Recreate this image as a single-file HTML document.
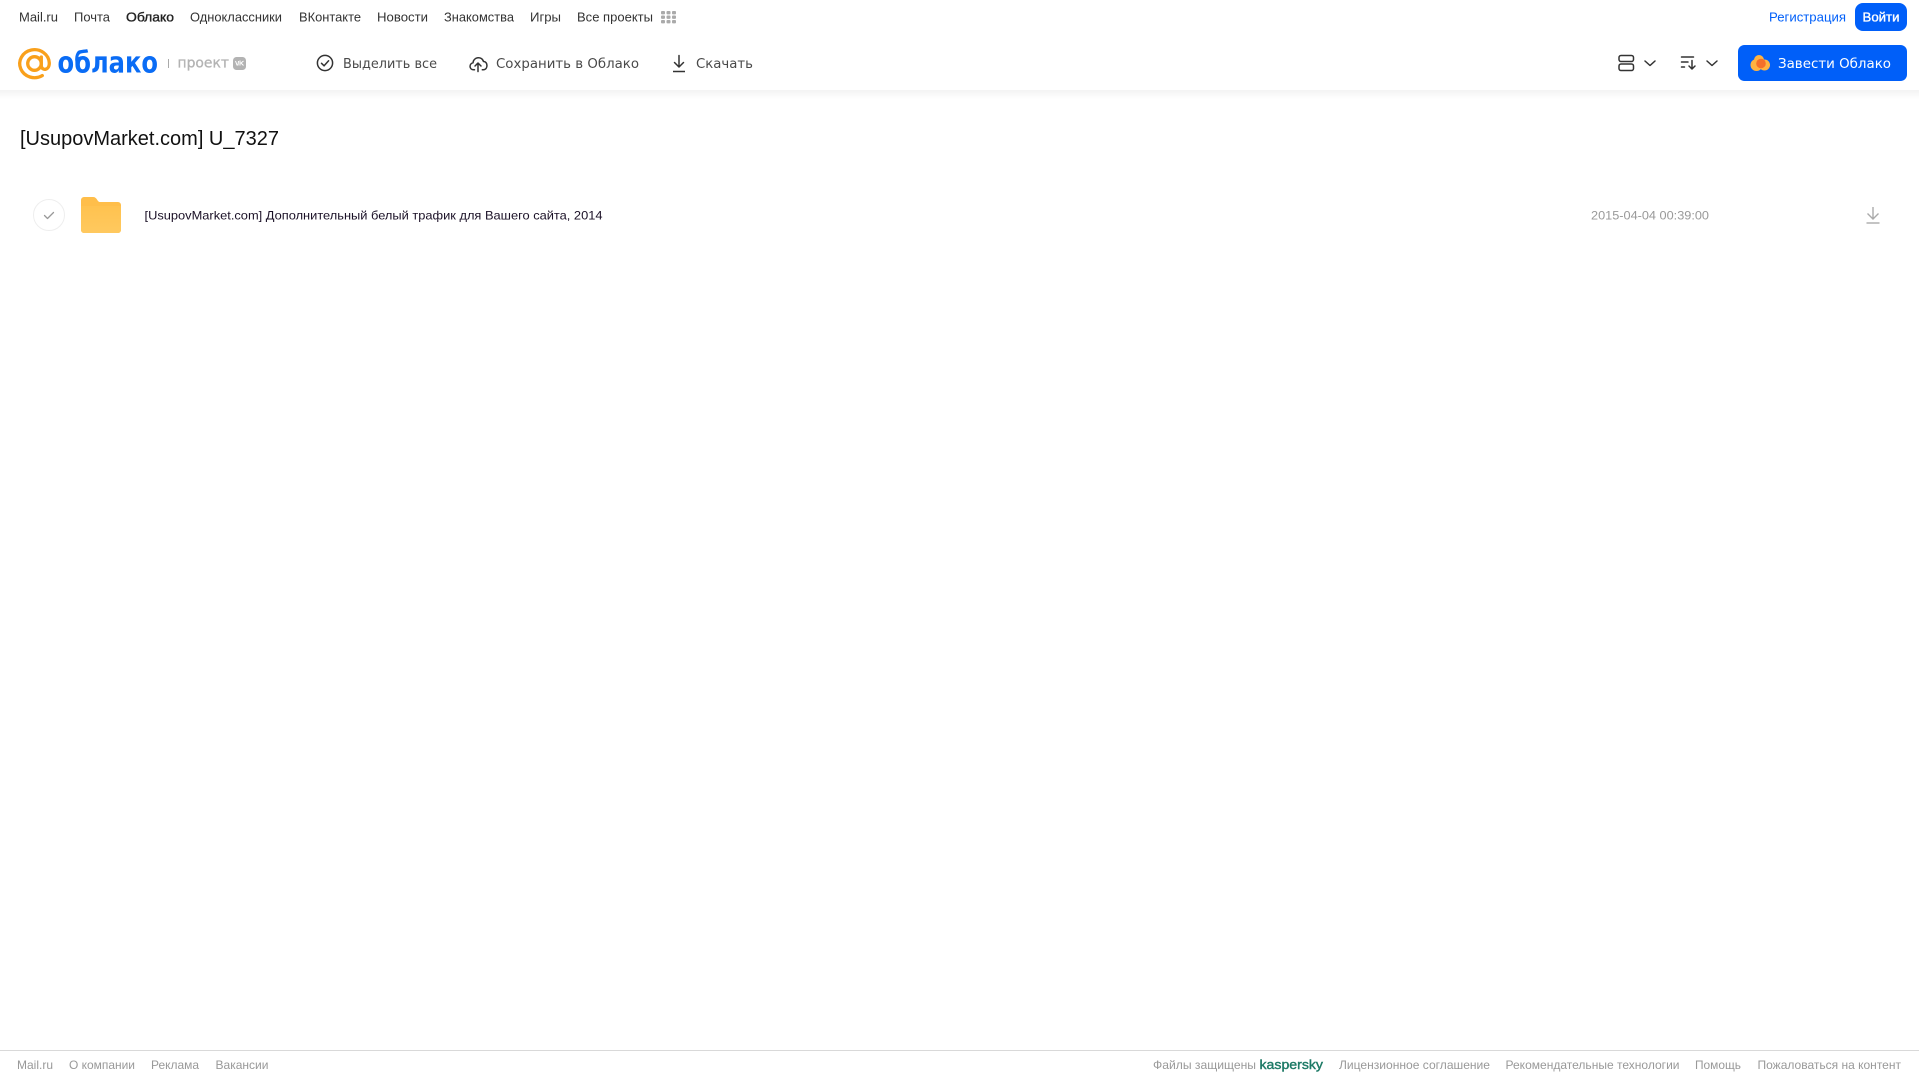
<!DOCTYPE html>
<html lang="ru">
<head>
<meta charset="utf-8">
<title>Облако</title>
<style>
html,body{margin:0;padding:0;background:#fff;width:1919px;height:1079px;overflow:hidden}
svg{display:block}
text{font-family:"Liberation Sans",Arial,sans-serif}
.n{font-size:13px;fill:#333}
.t{font-size:13.5px;fill:#4a4a4a;font-family:"DejaVu Sans","Liberation Sans",sans-serif}
.f{font-size:12px;fill:#999}
</style>
</head>
<body>
<svg width="1919" height="1079" viewBox="0 0 1919 1079" xmlns="http://www.w3.org/2000/svg">
<defs>
<linearGradient id="sh" x1="0" y1="0" x2="0" y2="1"><stop offset="0" stop-color="#f3f3f3"/><stop offset="1" stop-color="#fff"/></linearGradient>
<linearGradient id="fo" x1="0" y1="0" x2="0" y2="1"><stop offset="0" stop-color="#ffc24f"/><stop offset="1" stop-color="#ffc95f"/></linearGradient>
</defs>
<rect width="1919" height="1079" fill="#fff"/>
<rect x="0" y="90" width="1919" height="9" fill="url(#sh)"/>

<!-- top nav -->
<text class="n" x="19" y="21.5" textLength="39" lengthAdjust="spacingAndGlyphs">Mail.ru</text>
<text class="n" x="74" y="21.5" textLength="36" lengthAdjust="spacingAndGlyphs">Почта</text>
<text class="n" x="126" y="21.5" textLength="48" lengthAdjust="spacingAndGlyphs" stroke="#222" stroke-width=".35" style="fill:#222">Облако</text>
<text class="n" x="190" y="21.5" textLength="92" lengthAdjust="spacingAndGlyphs">Одноклассники</text>
<text class="n" x="299" y="21.5" textLength="62" lengthAdjust="spacingAndGlyphs">ВКонтакте</text>
<text class="n" x="377" y="21.5" textLength="51" lengthAdjust="spacingAndGlyphs">Новости</text>
<text class="n" x="444" y="21.5" textLength="70" lengthAdjust="spacingAndGlyphs">Знакомства</text>
<text class="n" x="530" y="21.5" textLength="31" lengthAdjust="spacingAndGlyphs">Игры</text>
<text class="n" x="577" y="21.5" textLength="76" lengthAdjust="spacingAndGlyphs">Все проекты</text>
<g fill="#aaa">
<rect x="661" y="11" width="4" height="3.400" rx="1"/><rect x="666.500" y="11" width="4" height="3.400" rx="1"/><rect x="672" y="11" width="4" height="3.400" rx="1"/>
<rect x="661" y="15.500" width="4" height="3.400" rx="1"/><rect x="666.500" y="15.500" width="4" height="3.400" rx="1"/><rect x="672" y="15.500" width="4" height="3.400" rx="1"/>
<rect x="661" y="20" width="4" height="3.400" rx="1"/><rect x="666.500" y="20" width="4" height="3.400" rx="1"/><rect x="672" y="20" width="4" height="3.400" rx="1"/>
</g>
<text x="1769" y="21.500" font-size="13" fill="#005ff9" textLength="77" lengthAdjust="spacingAndGlyphs">Регистрация</text>
<rect x="1855" y="3" width="52" height="28" rx="8" fill="#005ff9"/>
<text x="1862.500" y="21.500" font-size="13" fill="#fff" stroke="#fff" stroke-width=".35" textLength="37" lengthAdjust="spacingAndGlyphs">Войти</text>

<!-- logo -->
<g fill="none" stroke="#f9a01b" stroke-width="3.300" stroke-linecap="round">
<circle cx="34.500" cy="63.500" r="6.800"/>
<path d="M41.300 57v8.500c0 5.500 8 5.500 8-2.500a14.800 14 0 1 0-7 12.600"/>
</g>
<text x="57.500" y="72.500" font-size="29" font-weight="700" fill="#0a6cf5" style="font-family:'DejaVu Sans','Liberation Sans',sans-serif" textLength="100.500" lengthAdjust="spacingAndGlyphs">облако</text>
<rect x="168" y="59" width="1" height="9" fill="#aaa"/>
<text x="177.500" y="67.500" font-size="14" fill="#b3b3b3" stroke="#b3b3b3" stroke-width=".3" style="font-family:'DejaVu Sans','Liberation Sans',sans-serif" textLength="51.500" lengthAdjust="spacingAndGlyphs">проект</text>
<rect x="233" y="57" width="13" height="13" rx="3.500" fill="#b3b3b3"/>
<path d="M235.500 61l1.500 4h1l.5-4M240 60.500v5M243.500 61l-2.500 2 2.500 2.500" fill="none" stroke="#fff" stroke-width="1"/>

<!-- toolbar -->
<g fill="none" stroke="#333" stroke-width="1.500" stroke-linecap="round" stroke-linejoin="round">
<circle cx="325" cy="63" r="7.600"/>
<path d="M321.500 63.300l2.600 2.500 4.500-5"/>
<path d="M474.500 69.800h-.8c-4.500 0-5-6-.7-7 .5-6 9-7 10.500-1.300 4.300-.3 5 7.800-.2 8.300h-1"/>
<path d="M478 71.500v-8.500M475 66l3-3 3 3"/>
<path d="M679 55.500v11.500M674.500 62.500l4.500 4.500 4.500-4.500"/>
<path d="M673 71.500h12" stroke-linecap="butt"/>
</g>
<text class="t" x="343" y="68" textLength="94" lengthAdjust="spacingAndGlyphs">Выделить все</text>
<text class="t" x="496" y="68" textLength="143" lengthAdjust="spacingAndGlyphs">Сохранить в Облако</text>
<text class="t" x="696" y="68" textLength="57" lengthAdjust="spacingAndGlyphs">Скачать</text>

<!-- right toolbar -->
<g fill="none" stroke="#333" stroke-width="1.500" stroke-linecap="round" stroke-linejoin="round">
<rect x="1619" y="55.500" width="14.500" height="6" rx="2"/>
<rect x="1619" y="64" width="14.500" height="6.500" rx="2"/>
<path d="M1645 61l5 4.500 5-4.500"/>
<path d="M1707 61l5 4.500 5-4.500"/>
<path d="M1681.500 57h12M1681.500 62h6.500M1681.500 67h3"/>
<path d="M1692 60.500v8.500M1689 66l3 3 3-3"/>
</g>
<rect x="1738" y="45" width="169" height="36" rx="6.500" fill="#005ff9"/>
<circle cx="1756.500" cy="65" r="6" fill="#ffb340"/>
<circle cx="1759" cy="60" r="5" fill="#ffb340"/>
<circle cx="1764.500" cy="65" r="5.500" fill="#ffb340"/>
<circle cx="1761" cy="63.500" r="4.800" fill="#f4702a"/>
<text x="1778" y="68" font-size="13.500" fill="#fff" style="font-family:'DejaVu Sans','Liberation Sans',sans-serif" textLength="113" lengthAdjust="spacingAndGlyphs">Завести Облако</text>

<!-- title -->
<text x="20" y="145" font-size="20" fill="#111" textLength="259" lengthAdjust="spacingAndGlyphs">[UsupovMarket.com] U_7327</text>

<!-- row -->
<circle cx="49" cy="215" r="15.500" fill="#fff" stroke="#eee" stroke-width="1"/>
<path d="M44.500 215.500l3 3 6-6" fill="none" stroke="#999" stroke-width="1.300" stroke-linecap="round" stroke-linejoin="round"/>
<path d="M81 200a3 3 0 0 1 3-3h9c2 0 3 1 4 2.500 .8 1.200 1.500 2.500 3 2.500h18a3 3 0 0 1 3 3v25a3 3 0 0 1-3 3H84a3 3 0 0 1-3-3z" fill="#ffbe4a"/>
<path d="M81 206h40v24a3 3 0 0 1-3 3H84a3 3 0 0 1-3-3z" fill="url(#fo)"/>
<text x="144.500" y="219.500" font-size="12" fill="#1a1026" textLength="458" lengthAdjust="spacingAndGlyphs">[UsupovMarket.com] Дополнительный белый трафик для Вашего сайта, 2014</text>
<text x="1591" y="219.500" font-size="12" fill="#999" textLength="118" lengthAdjust="spacingAndGlyphs">2015-04-04 00:39:00</text>
<g fill="none" stroke="#aaa" stroke-width="1.400">
<path d="M1873 207v12M1867.500 213.500l5.500 5.500 5.500-5.500"/>
<path d="M1866.500 223h13"/>
</g>

<!-- footer -->
<rect x="0" y="1050" width="1919" height="1" fill="#d9d9d9"/>
<text class="f" x="17" y="1069" textLength="36" lengthAdjust="spacingAndGlyphs">Mail.ru</text>
<text class="f" x="69" y="1069" textLength="66" lengthAdjust="spacingAndGlyphs">О компании</text>
<text class="f" x="151" y="1069" textLength="48" lengthAdjust="spacingAndGlyphs">Реклама</text>
<text class="f" x="215.500" y="1069" textLength="53" lengthAdjust="spacingAndGlyphs">Вакансии</text>
<text class="f" x="1153" y="1069" textLength="103" lengthAdjust="spacingAndGlyphs">Файлы защищены</text>
<text x="1259.500" y="1069" font-size="13" fill="#1d7a66" stroke="#1d7a66" stroke-width=".4" textLength="63.500" lengthAdjust="spacingAndGlyphs">kaspersky</text>
<text class="f" x="1339" y="1069" textLength="151" lengthAdjust="spacingAndGlyphs">Лицензионное соглашение</text>
<text class="f" x="1505.500" y="1069" textLength="174" lengthAdjust="spacingAndGlyphs">Рекомендательные технологии</text>
<text class="f" x="1695" y="1069" textLength="46" lengthAdjust="spacingAndGlyphs">Помощь</text>
<text class="f" x="1757.500" y="1069" textLength="143.500" lengthAdjust="spacingAndGlyphs">Пожаловаться на контент</text>
</svg>
</body>
</html>
